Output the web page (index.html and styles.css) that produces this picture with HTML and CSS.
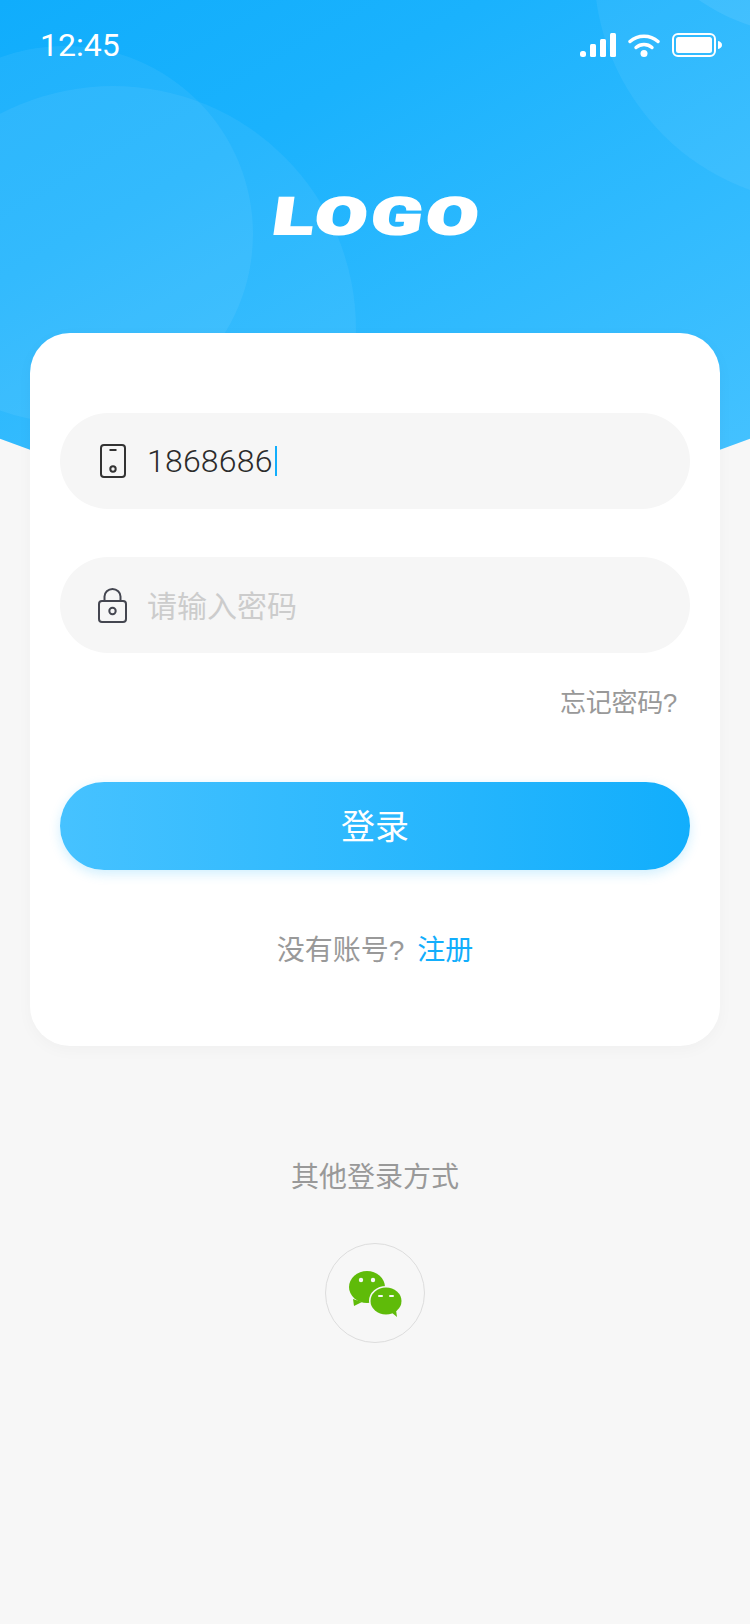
FILE: index.html
```html
<!DOCTYPE html>
<html>
    <head>
        <meta charset="utf-8">
        <link rel="stylesheet" href="styles.css">
    </head>
    <body>
        <div class="page">
            <div class="hero">
                <div class="blob blob-a"></div>
                <div class="blob blob-b"></div>
                <div class="blob blob-c"></div>
                <div class="blob blob-d"></div>
                <div class="status-bar">
                    <span class="time">12:45</span>
                    <div class="status-icons">
                        <svg class="signal" width="36" height="24" viewBox="0 0 36 24" fill="#fff">
                            <rect x="0" y="18" width="6" height="6" rx="2.5"/>
                            <rect x="10" y="11" width="6" height="13" rx="1.5"/>
                            <rect x="20" y="6" width="6" height="18" rx="1.5"/>
                            <rect x="30" y="0" width="6" height="24" rx="1.5"/>
                        </svg>
                        <svg class="wifi" width="32" height="24" viewBox="0 0 32 24" fill="none" stroke="#fff" stroke-width="3.4" stroke-linecap="round">
                            <path d="M2 8.5C9.800 1.500 22.200 1.500 30 8.500"/>
                            <path d="M8 14.500C12.500 10.500 19.500 10.500 24 14.500"/>
                            <circle cx="16" cy="20.500" r="3.500" fill="#fff" stroke="none"/>
                        </svg>
                        <svg class="battery" width="50" height="24" viewBox="0 0 50 24" fill="none">
                            <rect x="1" y="1" width="42" height="22" rx="5" stroke="#fff" stroke-width="2"/>
                            <rect x="4" y="4" width="36" height="16" rx="2.500" fill="#fff"/>
                            <path d="M46 8C48.500 8.500 50 10 50 12C50 14 48.500 15.500 46 16Z" fill="#fff"/>
                        </svg>
                    </div>
                </div>
                <div class="logo">LOGO</div>
            </div>

            <div class="card">
                <div class="field">
                    <svg class="field-icon" width="32" height="36" viewBox="0 0 32 36" fill="none" stroke="#333" stroke-width="2">
                        <rect x="5" y="2" width="24" height="32" rx="3"/>
                        <path d="M13.500 7H20.500"/>
                        <circle cx="17" cy="26" r="2.700"/>
                    </svg>
                    <span class="field-value">1868686</span><span class="caret"></span>
                </div>
                <div class="field">
                    <svg class="field-icon" width="32" height="36" viewBox="0 0 32 36" fill="none" stroke="#444650" stroke-width="2">
                        <rect x="3" y="14" width="27" height="21" rx="3"/>
                        <path d="M8.500 14V9.500C8.500 5.500 12 2 16.500 2C21 2 24.500 5.500 24.500 9.500V14"/>
                        <circle cx="16.500" cy="24" r="3.200"/>
                    </svg>
                    <span class="field-placeholder">请输入密码</span>
                </div>
                <div class="forgot">忘记密码?</div>
                <div class="login-btn">登录</div>
                <div class="register">没有账号?<span class="register-link">注册</span></div>
            </div>

            <div class="other-title">其他登录方式</div>
            <div class="other-list">
                <div class="wechat">
                    <svg width="60" height="54" viewBox="0 0 60 54">
                        <path d="M8 33L9 40L17 36Z" fill="#5fbb09"/>
                        <ellipse cx="22" cy="21" rx="18" ry="16" fill="#5fbb09"/>
                        <circle cx="16" cy="14" r="2.200" fill="#f7f7f7"/>
                        <circle cx="28" cy="14" r="2.200" fill="#f7f7f7"/>
                        <ellipse cx="41" cy="35" rx="15.500" ry="13.500" fill="#5fbb09" stroke="#f7f7f7" stroke-width="3" paint-order="stroke"/>
                        <path d="M46 46L52 51L51 44Z" fill="#5fbb09"/>
                        <rect x="33" y="29" width="5" height="2" rx="1" fill="#f7f7f7"/>
                        <rect x="44" y="29" width="5" height="2" rx="1" fill="#f7f7f7"/>
                    </svg>
                </div>
            </div>
        </div>
    </body>
</html>
```

FILE: styles.css
```css
* {
    box-sizing: border-box;
}

html, body {
    margin: 0;
    padding: 0;
}

body {
    background: #f7f7f7;
    font-family: "Liberation Sans", "Noto Sans CJK SC", sans-serif;
}

.page {
    width: 750px;
    height: 1624px;
    overflow: hidden;
}

.hero {
    position: relative;
    height: 507px;
    overflow: hidden;
    background: linear-gradient(150deg, #10adfc 0%, #1ab2fd 30%, #48c3ff 100%);
    clip-path: circle(1037px at 375px -528px);
}

.blob {
    position: absolute;
    border-radius: 50%;
}

.blob-a {
    left: -123px;
    top: 46px;
    width: 376px;
    height: 376px;
    background: rgba(255, 255, 255, 0.06);
}

.blob-b {
    left: -130px;
    top: 86px;
    width: 486px;
    height: 486px;
    background: rgba(255, 255, 255, 0.06);
}

.blob-c {
    left: 594px;
    top: -268px;
    width: 472px;
    height: 472px;
    background: rgba(255, 255, 255, 0.06);
}

.blob-d {
    left: 612px;
    top: -368px;
    width: 404px;
    height: 404px;
    background: rgba(255, 255, 255, 0.08);
}

.status-bar {
    position: relative;
    display: flex;
    justify-content: space-between;
    align-items: center;
    height: 90px;
    padding: 0 28px 0 40px;
    color: #fff;
}

.time {
    font-family: Roboto, sans-serif;
    font-size: 32px;
    font-weight: 400;
}

.status-icons {
    display: flex;
    align-items: center;
    gap: 12px;
}

.logo {
    position: relative;
    margin-top: 97px;
    padding-left: 4px;
    height: 60px;
    line-height: 60px;
    text-align: center;
    font-family: Roboto, sans-serif;
    font-size: 51px;
    font-weight: 900;
    letter-spacing: 3px;
    color: #fff;
    -webkit-text-stroke: 2px #fff;
    transform: skewX(-8deg) scaleX(1.46);
}

.card {
    position: relative;
    width: 690px;
    height: 713px;
    margin: -174px 0 0 30px;
    padding: 80px 30px 0;
    background: #fff;
    border-radius: 40px;
    box-shadow: 0 4px 16px rgba(0, 0, 0, 0.03);
}

.field {
    display: flex;
    align-items: center;
    height: 96px;
    padding-left: 36px;
    margin-bottom: 48px;
    background: #f6f6f6;
    border-radius: 48px;
}

.field + .field {
    margin-bottom: 0;
}

.field-icon {
    margin-right: 20px;
    flex-shrink: 0;
}

.field-value {
    margin-left: -1px;
    font-family: Roboto, sans-serif;
    font-weight: 300;
    font-size: 32px;
    letter-spacing: 0.2px;
    color: #2b2b2b;
}

.caret {
    width: 2px;
    height: 30px;
    margin-left: 2px;
    background: #12aefc;
}

.field-placeholder {
    padding-bottom: 3px;
    margin-left: -1px;
    font-size: 30px;
    color: #ccc;
}

.forgot {
    margin-top: 32px;
    padding-right: 13px;
    line-height: 36px;
    font-size: 26px;
    letter-spacing: -0.3px;
    color: #999;
    text-align: right;
}

.login-btn {
    height: 88px;
    margin-top: 61px;
    line-height: 90px;
    text-align: center;
    font-size: 34px;
    color: #fff;
    background: linear-gradient(90deg, #46c2ff, #12aefc);
    border-radius: 44px;
    box-shadow: 0 4px 12px rgba(18, 174, 252, 0.2);
}

.register {
    margin-top: 61px;
    line-height: 40px;
    text-align: center;
    font-size: 28px;
    color: #999;
}

.register-link {
    margin-left: 13px;
    color: #12aefc;
}

.other-title {
    margin-top: 112px;
    line-height: 40px;
    text-align: center;
    font-size: 28px;
    color: #999;
}

.other-list {
    display: flex;
    justify-content: center;
    margin-top: 45px;
}

.wechat {
    display: flex;
    align-items: center;
    justify-content: center;
    width: 100px;
    height: 100px;
    border: 1px solid #ddd;
    border-radius: 50%;
}
```
